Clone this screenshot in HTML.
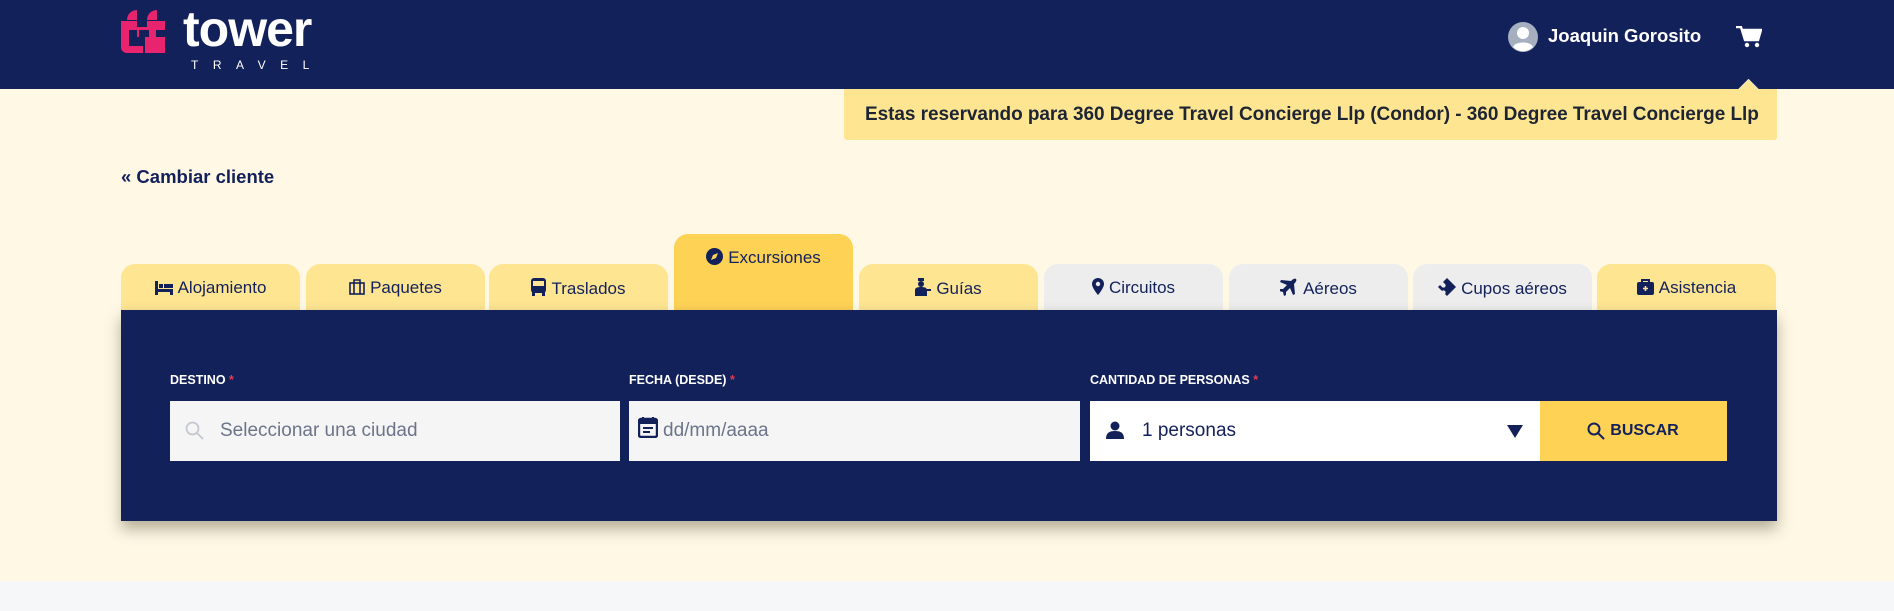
<!DOCTYPE html>
<html><head><meta charset="utf-8"><style>
*{box-sizing:border-box;margin:0;padding:0}
body{width:1894px;height:611px;background:#f6f7f9;font-family:"Liberation Sans",sans-serif;position:relative;overflow:hidden}
.cream{position:absolute;left:0;top:0;width:1894px;height:581px;background:#fef8e5}
.hdr{position:absolute;left:0;top:0;width:1894px;height:89px;background:#13215a}
.abs{position:absolute}
.banner{left:844px;top:89px;width:933px;height:51px;background:#fee592;border-radius:0 0 3px 3px;color:#1d2433;font-weight:bold;font-size:19px;line-height:51px;padding-left:21px;white-space:nowrap;letter-spacing:-0.05px}
.diamond{left:1741px;top:82px;width:15px;height:15px;background:#fee592;transform:rotate(45deg);border:1px solid #f0e6c8}
.tab{position:absolute;top:264px;width:179px;height:60px;background:linear-gradient(#fee592 70%,#ead58a);border-radius:14px 14px 0 0;font-size:17px;color:#13215a;text-align:center;padding-top:14px;white-space:nowrap}
.tab svg{vertical-align:-2px;margin-right:5px}
.tab.g{background:linear-gradient(#ededed 70%,#dcdcdc)}
.tab.a{top:234px;height:90px;background:linear-gradient(#fed255 80%,#eec04a);padding-top:14px}
.panel{left:121px;top:310px;width:1656px;height:211px;background:#13215a;box-shadow:0 8px 14px rgba(90,85,60,.45)}
.lbl{position:absolute;top:373px;color:#fff;font-size:12.5px;font-weight:bold}
.lbl b{color:#e23b4f}
.inp{position:absolute;top:401px;height:60px;background:#f5f5f5;font-size:19px;color:#6b7489;line-height:60px}
</style></head><body>
<div class="cream"></div>
<div class="hdr"></div>
<!-- logo -->
<svg class="abs" style="left:121px;top:10px" width="44" height="44" viewBox="0 0 44 44">
<path fill="#e8246f" d="M6 10A10 10 0 0 1 16 0V10zM26 10A10 10 0 0 1 36 0V10z"/>
<path fill="#e8246f" d="M0 11h16v6h10v-6h18v9h-9v7h9v16H24V27h4v-7h-10v7h-2V20H8v16h14v7H6a6 6 0 0 1-6-6z"/>
</svg>
<div class="abs" style="left:183px;top:0px;color:#fff;font-weight:bold;font-size:50px;letter-spacing:-1px">tower</div>
<div class="abs" style="left:191px;top:58px;color:#fff;font-size:12px;letter-spacing:14.5px">TRAVEL</div>
<!-- user -->
<svg class="abs" style="left:1508px;top:22px" width="30" height="30" viewBox="0 0 30 30"><circle cx="15" cy="15" r="15" fill="#a6afc0"/><circle cx="15" cy="11" r="6" fill="#fff"/><path d="M5 25c2-6 18-6 20 0a14 14 0 0 1-20 0z" fill="#fff"/></svg>
<div class="abs" style="left:1548px;top:25px;color:#fff;font-weight:bold;font-size:18.5px">Joaquin Gorosito</div>
<svg class="abs" style="left:1736px;top:26px" width="26" height="22" viewBox="0 0 26 22"><path d="M0 1h5l4 13h13l3-10H7" fill="none" stroke="#fff" stroke-width="2.4"/><path d="M7 4h18l-3 10H10z" fill="#fff"/><circle cx="11" cy="19" r="2.2" fill="#fff"/><circle cx="21" cy="19" r="2.2" fill="#fff"/></svg>
<div class="abs diamond"></div>
<div class="abs banner">Estas reservando para 360 Degree Travel Concierge Llp (Condor) - 360 Degree Travel Concierge Llp</div>
<div class="abs" style="left:121px;top:166px;color:#13215a;font-weight:bold;font-size:18.5px">« Cambiar cliente</div>
<!-- tabs -->
<div class="tab" style="left:121px"><svg width="18" height="14" viewBox="0 0 18 14"><path fill="#13215a" d="M0 0h3v8h15v6h-3v-3H3v3H0z"/><rect x="4" y="3" width="4" height="4" fill="#13215a"/><rect x="9" y="3" width="9" height="4" fill="#13215a"/></svg>Alojamiento</div>
<div class="tab" style="left:306px"><svg width="16" height="16" viewBox="0 0 16 16"><rect x="1" y="4" width="14" height="11" fill="none" stroke="#13215a" stroke-width="1.6"/><path d="M5 4V1h6v3M5 4v11M11 4v11" fill="none" stroke="#13215a" stroke-width="1.6"/></svg>Paquetes</div>
<div class="tab" style="left:489px"><svg width="15" height="18" viewBox="0 0 15 18"><rect x="0" y="0" width="15" height="15" rx="3" fill="#13215a"/><rect x="2" y="3" width="11" height="5" fill="#fee592"/><rect x="1" y="14" width="3" height="4" fill="#13215a"/><rect x="11" y="14" width="3" height="4" fill="#13215a"/></svg>Traslados</div>
<div class="tab a" style="left:674px"><svg width="17" height="17" viewBox="0 0 17 17"><circle cx="8.5" cy="8.5" r="8.5" fill="#13215a"/><path d="M12 5l-2 5-5 2 2-5z" fill="#fed255"/></svg>Excursiones</div>
<div class="tab" style="left:859px"><svg width="16" height="18" viewBox="0 0 16 18"><rect x="3" y="0" width="6" height="3" fill="#13215a"/><circle cx="6" cy="6" r="3" fill="#13215a"/><path d="M0 18v-6c0-2 2-3 6-3s6 1 6 3v6z" fill="#13215a"/><path d="M12 12h4" stroke="#13215a" stroke-width="2"/></svg>Guías</div>
<div class="tab g" style="left:1044px"><svg width="12" height="17" viewBox="0 0 12 17"><path d="M6 0a6 6 0 0 1 6 6c0 4-6 11-6 11S0 10 0 6a6 6 0 0 1 6-6z" fill="#13215a"/><circle cx="6" cy="6" r="2.2" fill="#ededed"/></svg>Circuitos</div>
<div class="tab g" style="left:1229px"><svg width="18" height="18" viewBox="0 0 18 18"><path d="M16 1c1 1 0 3-2 5l1 10-2 1-3-7-4 4v3l-2 1-1-4-4-1 1-2h3l4-4-7-3 1-2 10 1c2-2 4-3 5-2z" fill="#13215a"/></svg>Aéreos</div>
<div class="tab g" style="left:1413px"><svg width="18" height="18" viewBox="0 0 18 18"><path d="M9 0l9 9-9 9-2-2a2 2 0 0 0-3-3L2 11 0 9l2-2 2 2a2 2 0 0 0 3-3L5 4z" fill="#13215a"/></svg>Cupos aéreos</div>
<div class="tab" style="left:1597px"><svg width="17" height="16" viewBox="0 0 17 16"><path d="M5 3V1h7v2" fill="none" stroke="#13215a" stroke-width="2"/><rect x="0" y="3" width="17" height="13" rx="2" fill="#13215a"/><path d="M8.5 7v5M6 9.5h5" stroke="#fee592" stroke-width="1.6"/></svg>Asistencia</div>
<div class="abs panel"></div>
<div class="lbl" style="left:170px">DESTINO <b>*</b></div>
<div class="lbl" style="left:629px">FECHA (DESDE) <b>*</b></div>
<div class="lbl" style="left:1090px">CANTIDAD DE PERSONAS <b>*</b></div>
<div class="inp" style="left:170px;width:450px;padding-left:50px"><svg class="abs" style="left:15px;top:20px" width="19" height="19" viewBox="0 0 19 19"><circle cx="7.5" cy="7.5" r="6" fill="none" stroke="#c4c8d0" stroke-width="1.8"/><path d="M12 12l6 6" stroke="#c4c8d0" stroke-width="1.8"/></svg>Seleccionar una ciudad</div>
<div class="inp" style="left:629px;width:451px;padding-left:34px"><svg class="abs" style="left:9px;top:15px" width="20" height="22" viewBox="0 0 20 22"><rect x="1" y="3" width="18" height="18" rx="2" fill="none" stroke="#13215a" stroke-width="2.4"/><rect x="1" y="3" width="18" height="5" fill="#13215a"/><path d="M5 1v4M15 1v4" stroke="#13215a" stroke-width="2"/><path d="M5 12h10M5 16h7" stroke="#13215a" stroke-width="2"/></svg>dd/mm/aaaa</div>
<div class="inp" style="left:1090px;width:450px;background:#fff;color:#13215a;padding-left:52px"><svg class="abs" style="left:16px;top:20px" width="18" height="18" viewBox="0 0 18 18"><circle cx="9" cy="5" r="4.5" fill="#13215a"/><path d="M0 18c0-6 3-8 9-8s9 2 9 8z" fill="#13215a"/></svg>1 personas<svg class="abs" style="left:417px;top:24px" width="16" height="13" viewBox="0 0 16 13"><path d="M0 0h16L8 13z" fill="#13215a"/></svg></div>
<div class="inp" style="left:1540px;width:187px;background:#fed255;color:#13215a;font-weight:bold;font-size:16px;text-align:center;padding-left:22px"><svg class="abs" style="left:47px;top:21px" width="18" height="18" viewBox="0 0 18 18"><circle cx="7" cy="7" r="5.5" fill="none" stroke="#13215a" stroke-width="2"/><path d="M11 11l6 6" stroke="#13215a" stroke-width="2"/></svg>BUSCAR</div>
</body></html>
